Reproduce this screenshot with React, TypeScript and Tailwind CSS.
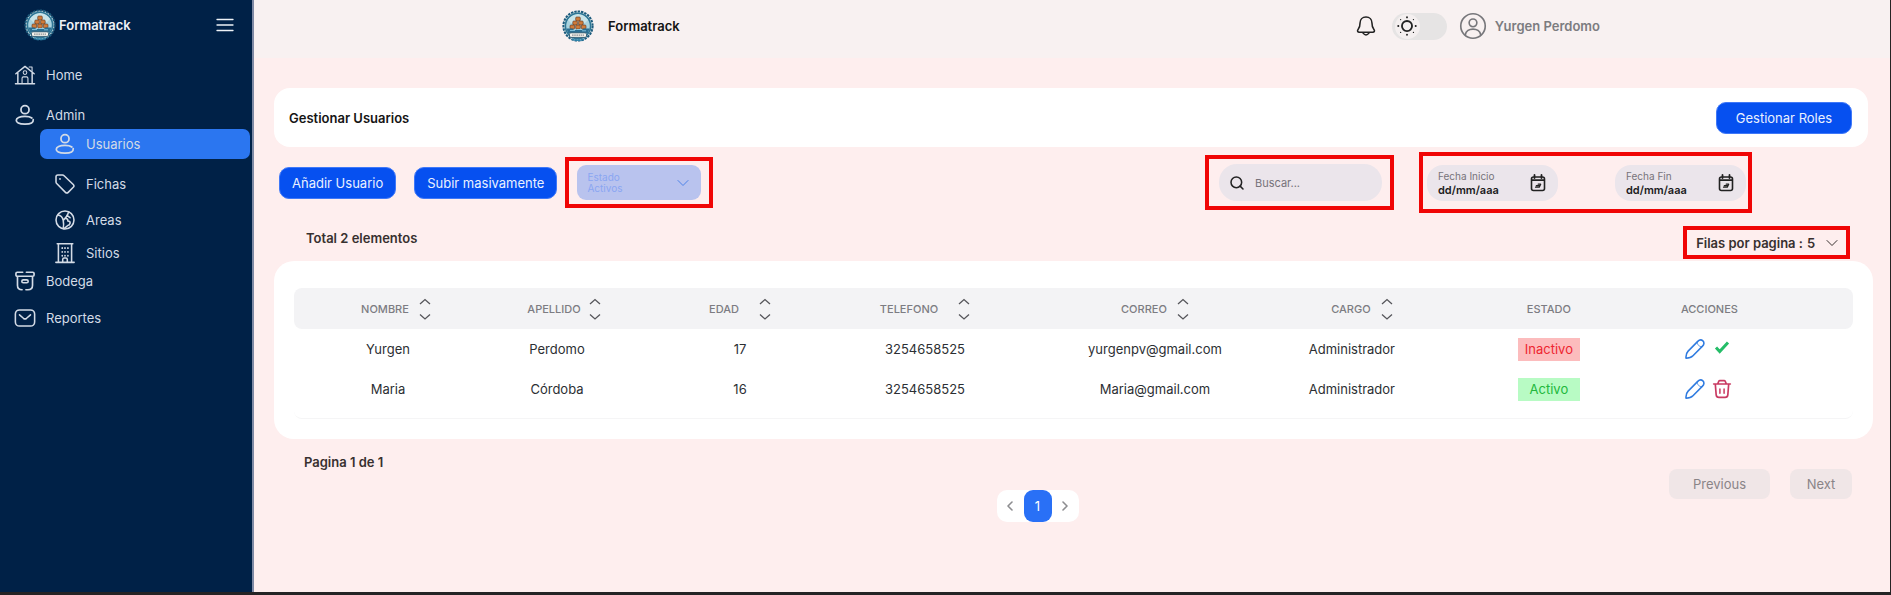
import type { ReactNode } from 'react';
import { Search } from 'lucide-react';

const blueButton =
  'h-8 rounded-[10px] bg-[#0650f0] text-[13px] leading-5 text-[#eaf0ff] border border-[#3f78f8] whitespace-nowrap';

function Stroke({ className, children, box = 24 }: { className: string; children: ReactNode; box?: number }) {
  return (
    <svg
      viewBox={`0 0 ${box} ${box}`}
      className={className}
      fill="none"
      stroke="currentColor"
      strokeLinecap="round"
      strokeLinejoin="round"
      aria-hidden="true"
    >
      {children}
    </svg>
  );
}

function Logo() {
  return (
    <svg viewBox="0 0 32 32" className="size-8 shrink-0" aria-hidden="true">
      <circle cx="16" cy="16" r="14.6" fill="#d5e6e8" stroke="#1c5a7c" strokeWidth="2" strokeDasharray="2.4 1" />
      <circle cx="16" cy="16" r="12.6" fill="#a9d3df" stroke="#2f7695" strokeWidth="1.6" />
      <path d="M6 10q3-5 10-6 7 1 10 6l-3 3H9z" fill="#c9e4e8" />
      <g fill="#cf7b3a" stroke="#5b3420" strokeWidth=".6">
        <rect x="13.7" y="7" width="4.6" height="4" rx="1" />
        <rect x="10.8" y="11" width="4.6" height="4" rx="1" />
        <rect x="16.6" y="11" width="4.6" height="4" rx="1" />
        <rect x="8" y="15" width="4.6" height="4" rx="1" />
        <rect x="13.7" y="15" width="4.6" height="4" rx="1" />
        <rect x="19.4" y="15" width="4.6" height="4" rx="1" />
      </g>
      <path d="M4.5 18.5h6l1.5 1.5h8l1.5-1.5h6L26 23H6z" fill="#2b6f93" />
      <path d="M8 20.5h5M15 19.5h4M20 20.8h4" stroke="#8fd0e8" strokeWidth=".8" />
      <rect x="7.5" y="22.8" width="17" height="4.6" rx="1.4" fill="#f6f3ec" stroke="#1c4a66" strokeWidth=".8" />
      <path d="M10 25.1h12" stroke="#8a8f94" strokeWidth="1.1" strokeDasharray="1.6 .6" />
      <path d="M10 29.3q6 2 12 0" stroke="#2f86ae" strokeWidth="1.4" fill="none" />
    </svg>
  );
}

function HomeIcon() {
  return (
    <Stroke className="size-[22px]">
      <path strokeWidth="1.6" d="M2 10.6 12 2.6l10 8M4.2 9.5V21M19.8 9.5V21M1.6 21.6h20.8" />
      <path strokeWidth="1.2" d="M16.5 3.2h3.2v4.6" />
      <circle cx="12" cy="9.4" r="2" strokeWidth="1.1" />
      <path strokeWidth="1.2" d="M8.8 21v-5.5q0-1.5 1.5-1.5h3.4q1.5 0 1.5 1.5V21" />
    </Stroke>
  );
}

function UserIcon() {
  return (
    <Stroke className="size-[22px]">
      <circle cx="12" cy="6.2" r="4.4" strokeWidth="1.9" />
      <path strokeWidth="1.9" d="M21 17c.3 3.200-2.200 5-9 5s-9.500-1.700-9.500-4.200 3.500-4.300 9.500-4.300c3.200 0 5.900.6 7.500 1.800" />
    </Stroke>
  );
}

function TagIcon() {
  return (
    <Stroke className="size-[22px]">
      <path strokeWidth="1.7" d="M2.200 4.200q0-2 2-2h5q1 0 1.800.8l10 9.600q1.500 1.500 0 3l-5.500 5.500q-1.500 1.500-3 0L3.200 11.700q-1-.9-1-2z" />
      <path strokeWidth="1.900" d="M6.500 6.500h.1" />
    </Stroke>
  );
}

function GlobeIcon() {
  return (
    <Stroke className="size-[22px]">
      <circle cx="12" cy="12" r="9.800" strokeWidth="1.700" />
      <path strokeWidth="1.700" d="M4 6.500q5 .5 6 5.500t0 9.500M10.500 12l4-5 1.500-4M10.500 12q1-2 3-1.500t1.500 2.500q3 .3 2.500 2.500t-2.500 2.500l-4 3.500M14 7l3.500 2.500" />
    </Stroke>
  );
}

function BuildingIcon() {
  return (
    <Stroke className="size-[22px]">
      <path strokeWidth="1.700" d="M3.500 2h17M4.800 2v20M19.200 2v20M2 22.200h20M9.500 22v-3q0-1.500 1.500-1.500h2q1.500 0 1.500 1.500v3" />
      <path strokeWidth="1.900" strokeDasharray=".2 4" d="M9 6.500v9M12 6.500v9M15.200 6.500v9" />
    </Stroke>
  );
}

function ArchiveIcon() {
  return (
    <Stroke className="size-[22px]">
      <path strokeWidth="1.800" d="M13.500 2.500h7q1.400 0 1.400 1.300v1.700q0 1.300-1.400 1.300h-17Q2.100 6.800 2.100 5.500V3.800q0-1.300 1.400-1.300h6M3.800 7v9.500q0 5 5 5M13 21.500h2.200q5 0 5-5V7" />
      <rect x="8.500" y="10.800" width="7" height="3.200" rx="1.600" strokeWidth="1.700" />
    </Stroke>
  );
}

function MailIcon() {
  return (
    <Stroke className="size-[22px]">
      <rect x="1.500" y="3.200" width="21" height="17.600" rx="4.500" strokeWidth="1.700" />
      <path strokeWidth="1.700" d="m6 8.500 4.300 3.800q1.700 1.400 3.400 0L18 8.500" />
    </Stroke>
  );
}

function Chevron({ className = '' }: { className?: string }) {
  return (
    <Stroke box={12} className={`size-3 shrink-0 pointer-events-none ${className}`}>
      <path d="m1 3.500 5 5 5-5" />
    </Stroke>
  );
}

function PageChevron({ className }: { className: string }) {
  return (
    <Stroke box={12} className={`size-3 ${className}`}>
      <path strokeWidth="1.600" d="m2 4 4 4 4-4" />
    </Stroke>
  );
}

function SortIcon() {
  return (
    <svg viewBox="0 0 12 24" className="h-6 w-3 shrink-0 text-[#55555a]" fill="none" stroke="currentColor" strokeWidth="1.300" aria-hidden="true">
      <path d="m1 7 5-4.500L11 7M1 17.500 6 22l5-4.500" />
    </svg>
  );
}

function PencilIcon() {
  return (
    <Stroke className="size-[22px] text-[#2f7be0]">
      <path strokeWidth="1.700" d="M2.200 22c-.3-3.200.3-5.600 2.300-7.700L15 3.700c1.900-1.900 4-2 5.600-.5s1.500 3.800-.4 5.700L9.800 19.400C7.800 21.400 5.400 22 2.200 22z" />
      <path strokeWidth=".8" d="M14.300 4.600c.3 3 2 4.700 5 5" />
    </Stroke>
  );
}

function TrashIcon() {
  return (
    <Stroke className="size-5 text-[#c93a62]">
      <path strokeWidth="2" d="M2 6h20M7 5.500l1-2.500q.4-1 1.500-1h5q1.100 0 1.500 1l1 2.500M4 6.500l1 12.500q.3 3 3.300 3h7.400q3 0 3.300-3l1-12.500" />
      <path strokeWidth="1.800" d="M9.500 12v5M14.500 12v5" />
    </Stroke>
  );
}

function CheckIcon() {
  return (
    <svg viewBox="0 0 20 20" className="mb-1 size-5" fill="none" stroke="#25bd68" strokeWidth="3" aria-hidden="true">
      <path d="m4 10.500 3.700 4L16 5.500" />
    </svg>
  );
}

function CalendarIcon() {
  return (
    <Stroke box={18} className="h-[18px] w-[18px] shrink-0 text-[#222]">
      <rect x="2.500" y="3" width="13" height="13.500" rx="2" strokeWidth="1.600" />
      <path strokeWidth="1.800" d="M5.500 1v3M12.500 1v3M3 6.200h12" />
      <path strokeWidth="1.200" d="M6.500 13.200h3.800l1.400-3H9.200M7.300 11.700h3.400" />
    </Stroke>
  );
}

function NavItem({ icon, label, className }: { icon: ReactNode; label: string; className: string }) {
  return (
    <a href="#" className={`flex items-center gap-[10px] ${className}`}>
      {icon}
      {label}
    </a>
  );
}

function Sidebar() {
  return (
    <aside className="flex w-[254px] shrink-0 flex-col border-r-2 border-[#7f8aa5] bg-[#002147] text-[13px] leading-5 text-[#d3dbe6]">
      <div className="flex h-[50px] items-center pl-6 pr-[18px] text-[#eef2f7]">
        <Logo />
        <span className="ml-[3px] font-semibold">Formatrack</span>
        <button type="button" aria-label="Menu" className="ml-auto">
          <Stroke box={18} className="size-[18px]">
            <path strokeWidth="1.300" d="M1 3.500h16M1 9h16M1 14.500h16" />
          </Stroke>
        </button>
      </div>
      <nav className="flex flex-col">
        <NavItem icon={<HomeIcon />} label="Home" className="h-[50px] pl-[14px]" />
        <NavItem icon={<UserIcon />} label="Admin" className="h-[29px] pl-[14px]" />
        <NavItem
          icon={<UserIcon />}
          label="Usuarios"
          className="ml-10 mr-0.5 h-[30px] rounded-[7px] bg-[#2b76f0] pl-[14px]"
        />
        <NavItem icon={<TagIcon />} label="Fichas" className="mt-[7px] h-9 pl-[54px]" />
        <NavItem icon={<GlobeIcon />} label="Areas" className="h-9 pl-[54px]" />
        <NavItem icon={<BuildingIcon />} label="Sitios" className="h-[30px] pl-[54px]" />
        <NavItem icon={<ArchiveIcon />} label="Bodega" className="h-[26px] pl-[14px]" />
        <NavItem icon={<MailIcon />} label="Reportes" className="mt-1.5 h-9 pl-[14px]" />
      </nav>
    </aside>
  );
}

function Header() {
  return (
    <header className="flex h-[58px] items-start bg-[#f8f1f1] pl-[308px] pr-[290px] pt-[10px] text-[13px] leading-5">
      <div className="flex items-center gap-[14px] font-semibold text-[#151515]">
        <Logo />
        Formatrack
      </div>
      <div className="ml-auto flex h-8 items-center">
        <button type="button" aria-label="Notificaciones" className="mr-[15px] text-[#222]">
          <Stroke className="size-[22px]">
            <path strokeWidth="1.700" d="M12 2.200c-4 0-6.500 2.800-6.500 6.500 0 4-.7 5.300-2 6.800-1.500 1.800-.5 3.300 1.200 3.300h14.600c1.700 0 2.700-1.500 1.200-3.300-1.300-1.500-2-2.800-2-6.800 0-3.700-2.500-6.500-6.500-6.500z" />
            <path strokeWidth="1.500" d="M8.500 19.500q3.500 4.500 7 0" />
          </Stroke>
        </button>
        <button
          type="button"
          role="switch"
          aria-checked="false"
          aria-label="Tema oscuro"
          className="mr-3 flex h-[27px] w-[55px] items-center rounded-full bg-[#e6e4e4] px-[3px] text-[#222]"
        >
          <span className="flex size-[25px] items-center justify-center rounded-full bg-[#f4efef]">
            <Stroke className="size-[22px]">
              <circle cx="12" cy="12" r="5.500" strokeWidth="2" />
              <path strokeWidth="2" d="M12 2.400v.2M12 21.400v.2M2.400 12h.2M21.400 12h.2" />
              <path strokeWidth="1.300" d="M5 5h.1M19 5h.1M5 19h.1M19 19h.1" />
            </Stroke>
          </span>
        </button>
        <Stroke className="mr-2 size-[28px] text-[#77777b]">
          <circle cx="12" cy="12" r="10.500" strokeWidth="1.400" />
          <circle cx="12" cy="9.300" r="3.300" strokeWidth="1.400" />
          <path strokeWidth="1.400" d="M5.500 19.500c.6-6.500 12.400-6.500 13 0" />
        </Stroke>
        <span className="font-semibold text-[#7c7c80]">Yurgen Perdomo</span>
      </div>
    </header>
  );
}

function DateField({ id, label }: { id: string; label: string }) {
  return (
    <div className="flex h-9 w-[131px] items-center rounded-2xl bg-[#ebe5eb] px-[11px]">
      <div className="min-w-0 flex-1">
        <label htmlFor={id} className="block text-[10px] leading-[14px] text-[#77737a]">
          {label}
        </label>
        <input
          id={id}
          placeholder="dd/mm/aaa"
          className="block w-full text-[11px] font-semibold leading-[15px] outline-none placeholder:text-[#1c1c1c] placeholder:opacity-100"
        />
      </div>
      <CalendarIcon />
    </div>
  );
}

function Toolbar() {
  return (
    <div className="mt-[5px] flex items-center pl-[25px] pr-[138px]">
      <button type="button" className={`${blueButton} px-3`}>
        Añadir Usuario
      </button>
      <button type="button" className={`${blueButton} ml-[18px] px-3`}>
        Subir masivamente
      </button>
      <div className="ml-2 border-4 border-[#f00505] px-2 py-1">
        <div className="flex h-[35px] w-[124px] items-center rounded-[9px] bg-[#b9c3ee] pl-[10px] pr-3 text-[#8aa6f2]">
          <div className="flex-1">
            <label htmlFor="estado" className="block text-[10px] leading-[11px]">
              Estado
            </label>
            <select id="estado" className="block w-full appearance-none text-[10px] leading-[11px] outline-none">
              <option>Activos</option>
            </select>
          </div>
          <Chevron className="text-[#4c82e8]" />
        </div>
      </div>
      <div className="ml-auto border-4 border-[#f00505] px-2 py-[5px]">
        <div className="ml-0.5 flex h-[37px] w-[163px] items-center gap-[10px] rounded-[18px] bg-[#ebe5eb] pl-[10px]">
          <Search className="size-4 shrink-0 text-[#222]" strokeWidth={2.3} />
          <input
            type="search"
            aria-label="Buscar"
            placeholder="Buscar..."
            className="w-full min-w-0 text-[11px] leading-4 outline-none placeholder:text-[#77737a] placeholder:opacity-100"
          />
        </div>
      </div>
      <div className="ml-[25px] flex gap-[57px] border-4 border-[#f00505] pb-2 pl-1 pr-0.5 pt-[9px]">
        <DateField id="fecha-inicio" label="Fecha Inicio" />
        <DateField id="fecha-fin" label="Fecha Fin" />
      </div>
    </div>
  );
}

const columns = [
  { name: 'NOMBRE', cell: 'pl-[50px]', head: 'gap-[10px] pl-4' },
  { name: 'APELLIDO', cell: '', head: 'gap-2 pl-[14px]' },
  { name: 'EDAD', cell: '', head: 'gap-5' },
  { name: 'TELEFONO', cell: '', head: 'gap-5' },
  { name: 'CORREO', cell: '', head: 'gap-[10px]' },
  { name: 'CARGO', cell: '', head: 'gap-[10px] pl-5' },
];

const users = [
  { data: ['Yurgen', 'Perdomo', '17', '3254658525', 'yurgenpv@gmail.com', 'Administrador'], active: false },
  { data: ['Maria', 'Córdoba', '16', '3254658525', 'Maria@gmail.com', 'Administrador'], active: true },
];

function UsersTable() {
  return (
    <section className="ml-5 mr-[17px] mt-0.5 rounded-[20px] bg-white px-5 pb-5 pt-[27px]">
      <div className="rounded-b-lg border-b border-[#f5f5f6] pb-[9px]">
        <table className="w-full table-fixed text-center text-[13px] leading-5 text-[#2c2f33]">
          <colgroup>
            <col className="w-[8.85%]" />
            <col className="w-[16.04%]" />
            <col className="w-[7.44%]" />
            <col className="w-[16.29%]" />
            <col className="w-[13.21%]" />
            <col className="w-[12.06%]" />
            <col className="w-[13.21%]" />
            <col className="w-[12.90%]" />
          </colgroup>
          <thead>
            <tr className="h-[41px] text-[11px] text-[#7c7c82]">
              {columns.map((c) => (
                <th key={c.name} className={`bg-[#f3f3f5] p-0 font-medium first:rounded-l-lg ${c.cell}`}>
                  <button type="button" className={`flex w-full items-center justify-center ${c.head}`}>
                    {c.name}
                    <SortIcon />
                  </button>
                </th>
              ))}
              <th className="bg-[#f3f3f5] p-0 font-medium">ESTADO</th>
              <th className="rounded-r-lg bg-[#f3f3f5] p-0 pr-[86px] font-medium">ACCIONES</th>
            </tr>
          </thead>
          <tbody>
            {users.map((u) => (
              <tr key={u.data[0]} className="h-10">
                {u.data.map((value, i) => (
                  <td key={columns[i].name} className={`p-0 ${columns[i].cell}`}>
                    {value}
                  </td>
                ))}
                <td className="p-0">
                  <span
                    className={`mx-auto block h-[23px] w-[62px] leading-[23px] ${
                      u.active ? 'bg-[#b8fbc4] text-[#22b83c]' : 'bg-[#fcbcbd] text-[#ee2630]'
                    }`}
                  >
                    {u.active ? 'Activo' : 'Inactivo'}
                  </span>
                </td>
                <td className="p-0 pr-[88px]">
                  <div className="flex items-center justify-center gap-[6px]">
                    <button type="button" aria-label="Editar">
                      <PencilIcon />
                    </button>
                    <button type="button" aria-label={u.active ? 'Eliminar' : 'Activar'}>
                      {u.active ? <TrashIcon /> : <CheckIcon />}
                    </button>
                  </div>
                </td>
              </tr>
            ))}
          </tbody>
        </table>
      </div>
    </section>
  );
}

function Footer() {
  return (
    <footer className="flex items-start justify-between pl-[50px] pr-[38px] pt-[13px] text-[13px] leading-5">
      <p className="w-[102px] font-semibold text-[#38302f]">Pagina 1 de 1</p>
      <div className="mt-[38px] flex items-center rounded-[10px] bg-white text-[#8d8d90]">
        <button type="button" aria-label="Anterior" className="flex h-[30px] w-[27px] items-center justify-center">
          <PageChevron className="rotate-90" />
        </button>
        <button type="button" className="h-8 w-7 rounded-[9px] bg-[#2970f6] text-white">
          1
        </button>
        <button type="button" aria-label="Siguiente" className="flex h-[30px] w-[27px] items-center justify-center">
          <PageChevron className="-rotate-90" />
        </button>
      </div>
      <div className="mt-[17px] flex gap-5 text-[#8a8487]">
        <button type="button" className="h-[30px] w-[101px] rounded-lg bg-[#f0e6e7]">
          Previous
        </button>
        <button type="button" className="h-[30px] w-[62px] rounded-lg bg-[#f0e6e7]">
          Next
        </button>
      </div>
    </footer>
  );
}

export default function App() {
  return (
    <div className="flex min-h-screen border-b-[3px] border-r border-[#252324] bg-[#feeeee] font-['Inter',sans-serif]">
      <Sidebar />
      <main className="min-w-0 flex-1">
        <Header />
        <div className="ml-5 mr-[22px] mt-[30px] flex h-[59px] items-center justify-between rounded-2xl bg-white pl-[15px] pr-4">
          <h1 className="text-[13px] font-semibold leading-5 text-[#151515]">Gestionar Usuarios</h1>
          <button type="button" className={`${blueButton} w-[136px]`}>
            Gestionar Roles
          </button>
        </div>
        <Toolbar />
        <div className="mt-[13px] flex items-start justify-between pl-[52px] pr-10 text-[13px] font-semibold leading-6 text-[#38302f]">
          <p>Total 2 elementos</p>
          <div className="flex h-[33px] items-center border-4 border-[#f00505] pl-[9px] pr-2">
            <label htmlFor="filas">Filas por pagina :</label>
            <select id="filas" className="ml-1 mr-[10px] appearance-none outline-none">
              <option>5</option>
            </select>
            <Chevron />
          </div>
        </div>
        <UsersTable />
        <Footer />
      </main>
    </div>
  );
}
